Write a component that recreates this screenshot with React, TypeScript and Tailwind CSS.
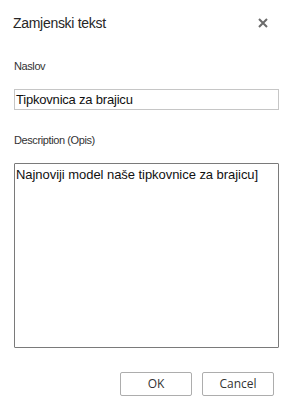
export default function App() {
  return (
    <div className="w-[287px] h-[408px] bg-white relative font-['Liberation_Sans',Arial,sans-serif] text-[#222]">
      <div className="flex items-start justify-between pl-[13px] pr-[19px] pt-[14px]">
        <h1 className="text-[14px] leading-[18px] tracking-[-0.3px] text-[#262626]">Zamjenski tekst</h1>
        <button className="mt-[4px] w-[10px] h-[10px] flex items-center justify-center">
          <svg width="10" height="10" viewBox="0 0 10 10">
            <path d="M1 1 L9 9 M9 1 L1 9" stroke="#6b6b6b" strokeWidth="2" />
          </svg>
        </button>
      </div>
      <div className="px-[14px] pr-[8px]">
        <div className="mt-[27px] text-[11px] leading-[14px] tracking-[-0.4px] text-[#333]">Naslov</div>
        <div className="mt-[16px] h-[21px] border border-[#c6c6c6] flex items-center pl-[1px] text-[13px] tracking-[-0.2px] text-[#111]">
          Tipkovnica za brajicu
        </div>
        <div className="mt-[23px] text-[11px] leading-[14px] tracking-[-0.4px] text-[#333]">Description (Opis)</div>
        <div className="mt-[16px] h-[185px] border border-[#7a7a7a] rounded-[1px] pl-[1px] pt-[3px] text-[13px] leading-[16px] tracking-[-0.05px] text-[#111]">
          Najnoviji model naše tipkovnice za brajicu]
        </div>
        <div className="mt-[24px] flex justify-end gap-[10px] pr-[5px] font-['Open_Sans',sans-serif] text-[12px] text-[#333]">
          <button className="w-[72px] h-[24px] border border-[#adadad] rounded-[2px] bg-white">OK</button>
          <button className="w-[72px] h-[24px] border border-[#adadad] rounded-[2px] bg-white">Cancel</button>
        </div>
      </div>
    </div>
  );
}
